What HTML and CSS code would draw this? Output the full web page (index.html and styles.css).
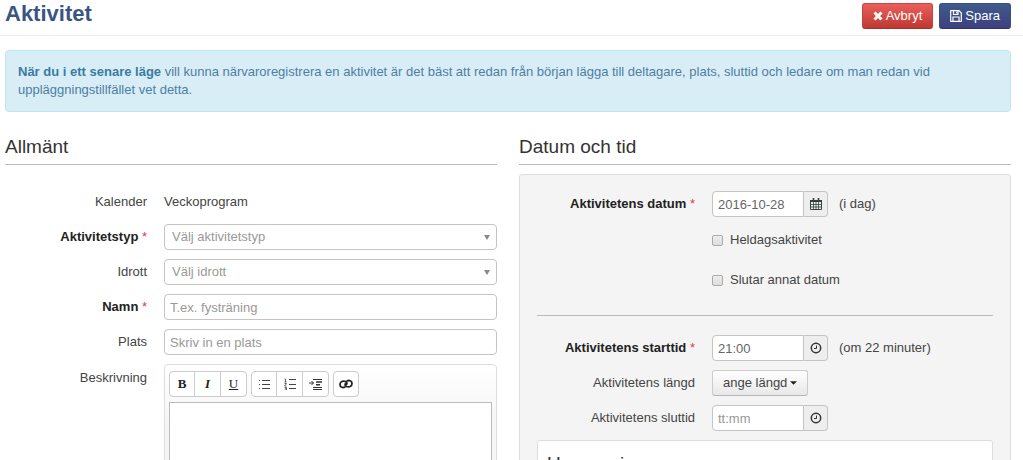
FILE: index.html
```html
<!DOCTYPE html>
<html lang="sv">
<head>
<meta charset="utf-8">
<title>Aktivitet</title>
<link rel="stylesheet" href="styles.css">
</head>
<body>
<header class="page-header">
  <h1>Aktivitet</h1>
  <div class="actions">
    <button type="button" class="btn btn-danger"><svg width="10" height="10" viewBox="0 0 10 10"><path d="M1.500 1.500l7 7M8.500 1.500l-7 7" stroke="#fff" stroke-width="3"/></svg>Avbryt</button>
    <button type="button" class="btn btn-primary"><svg width="12" height="12" viewBox="0 0 12 12" fill="none" stroke="#fff"><path d="M.7 .7h8.300l2.300 2.300v8.300H.7zM3.500 1v3.500h4.500V1M3 11V7h6v4" stroke-width="1.200"/><path d="M6.700 1.500v2" stroke-width="1.200"/></svg>Spara</button>
  </div>
</header>
<main>
  <p class="alert"><strong>När du i ett senare läge</strong> vill kunna närvaroregistrera en aktivitet är det bäst att redan från början lägga till deltagare, plats, sluttid och ledare om man redan vid uppläggningstillfället vet detta.</p>
  <form class="columns">
    <section class="column">
      <h2>Allmänt</h2>
      <div class="fields general">
        <div class="row"><span class="label">Kalender</span><span>Veckoprogram</span></div>
        <div class="row"><label class="label required" for="type">Aktivitetstyp <i>*</i></label>
          <div class="select"><select id="type"><option>Välj aktivitetstyp</option></select></div></div>
        <div class="row"><label class="label" for="sport">Idrott</label>
          <div class="select"><select id="sport"><option>Välj idrott</option></select></div></div>
        <div class="row"><label class="label required" for="name">Namn <i>*</i></label>
          <input class="text" id="name" type="text" placeholder="T.ex. fysträning"></div>
        <div class="row"><label class="label" for="place">Plats</label>
          <input class="text" id="place" type="text" placeholder="Skriv in en plats"></div>
        <div class="row row-top"><label class="label" for="description">Beskrivning</label>
          <div class="editor">
            <div class="toolbar">
              <div class="group">
                <button type="button" aria-label="Fet"><b>B</b></button>
                <button type="button" aria-label="Kursiv"><em>I</em></button>
                <button type="button" aria-label="Understruken"><u>U</u></button>
              </div>
              <div class="group">
                <button type="button" aria-label="Punktlista"><svg width="12" height="12" viewBox="0 0 12 12" stroke="#444"><path d="M4 2.500h8M4 6.500h8M4 10.500h8M1 2.500h1M1 6.500h1M1 10.500h1"/></svg></button>
                <button type="button" aria-label="Numrerad lista"><svg width="12" height="12" viewBox="0 0 12 12" fill="none" stroke="#444"><path d="M5 1.500h7M5 6.500h7M5 10.500h7"/><path d="M.5 1h1v3M.5 4h2M.5 5.500h2L.5 8h2M.5 9.500h2v2.500h-2M1 10.700h1.500" stroke-width=".8"/></svg></button>
                <button type="button" aria-label="Öka indrag"><svg width="13" height="12" viewBox="0 0 13 12" fill="none" stroke="#333"><path d="M4 1.500h9M4 9.500h9M4 11.500h9"/><path d="M7 4h6M7 6.700h4" stroke-width="1.500"/><path d="M0 5h4.500M2.500 3l2 2-2 2"/></svg></button>
              </div>
              <div class="group">
                <button type="button" aria-label="Länk"><svg width="14" height="10" viewBox="0 0 14 10" fill="none" stroke="#222" stroke-width="1.800" stroke-linecap="round"><path d="M6 8C4 9 1 8.500 1 5.500S4 1.500 6.500 2.500C8 3.200 8.300 4.500 7.500 5.500"/><path d="M8 2C10 1 13 1.500 13 4.500S10 8.500 7.500 7.500C6 6.800 5.700 5.500 6.500 4.500"/></svg></button>
              </div>
            </div>
            <textarea id="description"></textarea>
          </div></div>
      </div>
    </section>
    <section class="column">
      <h2>Datum och tid</h2>
      <div class="panel">
        <div class="fields schedule">
          <div class="row"><label class="label required" for="date">Aktivitetens datum <i>*</i></label>
            <div class="inline"><div class="input-group"><input class="text" id="date" type="text" value="2016-10-28"><button type="button" aria-label="Välj datum"><svg width="12" height="12" viewBox="0 0 12 12" fill="none" stroke="#34443a"><path d="M.5 2.500h11v9H.5z"/><path d="M0 3h12" stroke-width="2"/><path d="M3.500 0v3M8.500 0v3" stroke-width="1.600"/><path d="M3.500 4v7.500M6 4v7.500M8.500 4v7.500M1 6.500h10M1 9h10" stroke-width=".8"/></svg></button></div><span>(i dag)</span></div></div>
          <div class="checks">
            <label><input type="checkbox">Heldagsaktivitet</label>
            <label><input type="checkbox">Slutar annat datum</label>
          </div>
        </div>
        <hr>
        <div class="fields schedule">
          <div class="row"><label class="label required" for="start">Aktivitetens starttid <i>*</i></label>
            <div class="inline"><div class="input-group"><input class="text" id="start" type="text" value="21:00"><button type="button" aria-label="Välj starttid"><svg width="12" height="12" viewBox="0 0 12 12" fill="none" stroke="#333"><circle cx="6" cy="6" r="4.700" stroke-width="1.500"/><path d="M6.500 3.500v3H4"/></svg></button></div><span>(om 22 minuter)</span></div></div>
          <div class="row"><label class="label" for="length">Aktivitetens längd</label>
            <div class="inline"><button type="button" class="btn btn-default" id="length">ange längd<svg width="7" height="4" viewBox="0 0 8 4"><path d="M0 0h8L4 4z" fill="#222"/></svg></button></div></div>
          <div class="row"><label class="label" for="end">Aktivitetens sluttid</label>
            <div class="inline"><div class="input-group"><input class="text" id="end" type="text" placeholder="tt:mm"><button type="button" aria-label="Välj sluttid"><svg width="12" height="12" viewBox="0 0 12 12" fill="none" stroke="#333"><circle cx="6" cy="6" r="4.700" stroke-width="1.500"/><path d="M6.500 3.500v3H4"/></svg></button></div></div></div>
        </div>
        <div class="card"><h3>Upprepning</h3></div>
      </div>
    </section>
  </form>
</main>
</body>
</html>
```
FILE: styles.css
```css
* { box-sizing: border-box; }
html { scrollbar-width: none; }
body {
  margin: 0;
  background: #fff;
  color: #444;
  font: 13px/18px "Liberation Sans", Arial, sans-serif;
}
button, input, select, textarea { font: inherit; color: inherit; margin: 0; }
h1, h2, h3, p { margin: 0; }

.page-header {
  display: flex;
  justify-content: space-between;
  align-items: flex-start;
  height: 36px;
  padding: 0 12px 0 5px;
  border-bottom: 1px solid #eee;
}
h1 { font-size: 22px; line-height: 27px; color: #3a5583; }
.actions { display: flex; gap: 6px; padding-top: 3px; }
.btn {
  display: flex;
  align-items: center;
  justify-content: center;
  gap: 3px;
  height: 26px;
  padding: 0 10px;
  border: 1px solid;
  border-radius: 3px;
}
.btn-danger { color: #fff; background: linear-gradient(#ea5f5b, #bf3832); border-color: #c8453f #c8453f #a8302b; }
.btn-primary { color: #fff; background: linear-gradient(#3f5a8c, #3d4180); border-color: #3b4c80 #3b4c80 #303468; }
.btn-default { background: linear-gradient(#fff, #e8e8e8); border-color: #ccc #ccc #b5b5b5; }

main { padding: 14px 12px 0 5px; }
.alert {
  padding: 12px;
  border: 1px solid #bce8f1;
  border-radius: 4px;
  background: #d9edf7;
  color: #4d7fa3;
}
.alert strong { color: #3a7ca3; }

.columns { display: grid; grid-template-columns: 1fr 1fr; gap: 22px; padding-top: 23px; }
.column { min-width: 0; }
h2, h3 { font-size: 19px; font-weight: normal; color: #333; }
h2 { line-height: 24px; padding-bottom: 5px; border-bottom: 1px solid #bbb; }

.fields { display: flex; flex-direction: column; gap: 9px; }
.general { padding-top: 24px; }
.row { display: grid; align-items: center; min-height: 26px; }
.general .row { grid-template-columns: 142px 1fr; gap: 17px; }
.schedule .row { grid-template-columns: 158px 1fr; gap: 17px; }
.general .row-top { align-items: start; }
.row-top .label { padding-top: 5px; }
.label { text-align: right; }
.required { font-weight: bold; color: #222; }
.required i { font-weight: normal; font-style: normal; color: #e0403a; }

.text, select {
  width: 100%;
  height: 26px;
  padding: 0 5px;
  border: 1px solid #c4c4c4;
  border-radius: 4px;
  background: #fff;
  color: #666;
}
.text::placeholder { color: #999; opacity: 1; }
.select { position: relative; }
select { appearance: none; padding: 0 7px; color: #999; }
.select::after {
  content: "";
  position: absolute;
  right: 7px;
  top: 11px;
  border: 3px solid transparent;
  border-top: 5px solid #888;
  border-bottom: 0;
  pointer-events: none;
}

.editor {
  padding: 6px 4px 4px;
  border: 1px solid #ddd;
  border-radius: 4px;
  background: linear-gradient(#fff, #f5f5f5 60px);
}
.toolbar { display: flex; gap: 4px; padding-bottom: 5px; }
.group { display: flex; border: 1px solid #ccc; border-radius: 4px; background: #fff; }
.group button {
  display: flex;
  align-items: center;
  justify-content: center;
  width: 24px;
  height: 24px;
  padding: 0;
  border: 0;
  background: none;
  color: #222;
  font: bold 13px/16px "Liberation Serif", serif;
}
.group button + button { width: 26px; border-left: 1px solid #ccc; }
.group u { font-weight: normal; }
textarea {
  display: block;
  width: 100%;
  height: 120px;
  border: 1px solid #bbb;
  background: #fff;
  resize: none;
}

.panel {
  margin-top: 9px;
  padding: 16px 17px;
  border: 1px solid #ddd;
  border-radius: 3px;
  background: #f4f4f4;
}
.inline { display: flex; align-items: center; gap: 11px; }
.inline .btn-default { gap: 3px; }
.input-group { display: flex; width: 116px; }
.input-group .text { flex: 1; min-width: 0; border-radius: 4px 0 0 4px; }
.input-group button {
  display: flex;
  align-items: center;
  justify-content: center;
  width: 24px;
  padding: 0;
  border: 1px solid #c4c4c4;
  border-left: 0;
  border-radius: 0 4px 4px 0;
  background: #eee;
}
.checks {
  display: flex;
  flex-direction: column;
  align-items: flex-start;
  gap: 22px;
  padding: 5px 0 0 175px;
}
.checks label { display: flex; align-items: center; gap: 7px; }
.checks input {
  appearance: none;
  width: 11px;
  height: 11px;
  border: 1px solid #aaa;
  border-radius: 2px;
  background: linear-gradient(#eee, #ddd);
}
hr { margin: 26px 0 19px; border: 0; border-top: 1px solid #bbb; }
.card {
  margin-top: 9px;
  padding: 12px 9px;
  border: 1px solid #ddd;
  border-radius: 3px;
  background: #fff;
}
h3 { line-height: 22px; }
```
